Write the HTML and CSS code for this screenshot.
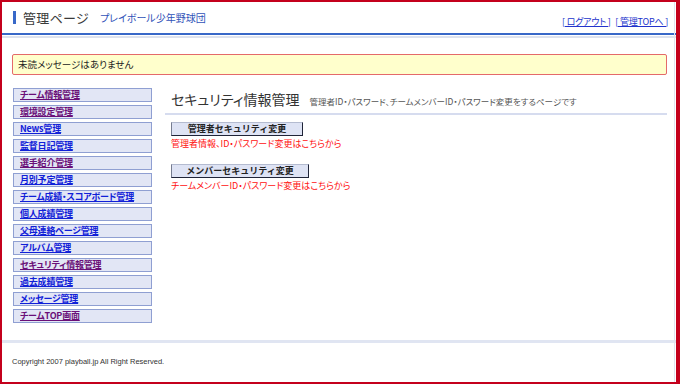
FILE: index.html
```html
<!DOCTYPE html>
<html lang="ja">
<head>
    <meta charset="UTF-8">
    <meta name="viewport" content="width=device-width, initial-scale=1.0">
    <title>管理ページ</title>
    <link rel="stylesheet" href="styles.css">
</head>
<body>
    <div class="frame">
        <div class="header">
            <div class="site-title">
                <span class="title-bar"></span>
                <h1>管理ページ</h1>
                <span class="team-name">プレイボール少年野球団</span>
            </div>
            <div class="header-links">
                <a href="#">[ ログアウト ]</a>
                <a href="#">[ 管理TOPへ ]</a>
            </div>
        </div>
        <div class="header-rule"></div>

        <div class="notice">未読メッセージはありません</div>

        <div class="layout">
            <ul class="side-menu">
                <li><a href="#" class="visited">チーム情報管理</a></li>
                <li><a href="#" class="visited">環境設定管理</a></li>
                <li><a href="#">News管理</a></li>
                <li><a href="#">監督日記管理</a></li>
                <li><a href="#" class="visited">選手紹介管理</a></li>
                <li><a href="#">月別予定管理</a></li>
                <li><a href="#">チーム成績・スコアボード管理</a></li>
                <li><a href="#">個人成績管理</a></li>
                <li><a href="#">父母連絡ページ管理</a></li>
                <li><a href="#">アルバム管理</a></li>
                <li><a href="#" class="visited">セキュリティ情報管理</a></li>
                <li><a href="#">過去成績管理</a></li>
                <li><a href="#">メッセージ管理</a></li>
                <li><a href="#" class="visited">チームTOP画面</a></li>
            </ul>

            <div class="main">
                <div class="page-head">
                    <h2>セキュリティ情報管理</h2>
                    <span class="page-desc">管理者ID・パスワード、チームメンバーID・パスワード変更をするページです</span>
                </div>

                <div class="action">
                    <button class="action-btn btn-admin">管理者セキュリティ変更</button>
                    <p class="action-note">管理者情報、ID・パスワード変更はこちらから</p>
                </div>

                <div class="action">
                    <button class="action-btn btn-member">メンバーセキュリティ変更</button>
                    <p class="action-note">チームメンバーID・パスワード変更はこちらから</p>
                </div>
            </div>
        </div>

        <div class="footer">
            Copyright 2007 playball.jp All Right Reserved.
        </div>
    </div>
</body>
</html>
```

FILE: styles.css
```css
body {
    margin: 0;
    font-family: "Noto Sans CJK JP", "Liberation Sans", sans-serif;
    font-feature-settings: "palt";
    color: #333;
    background: white;
}
.frame {
    box-sizing: border-box;
    width: 680px;
    height: 384px;
    border-style: solid;
    border-color: #c4001c;
    border-width: 2px 4px 2px 2px;
    position: relative;
    display: flex;
    flex-direction: column;
}
.frame::after {
    content: "";
    position: absolute;
    top: 0;
    bottom: 0;
    right: 1px;
    width: 1px;
    background: #dfe3ee;
}
.header {
    height: 31px;
    display: flex;
    align-items: center;
    justify-content: space-between;
    padding: 0 8px 0 11px;
    border-bottom: 2px solid #3868c8;
}
.site-title {
    display: flex;
    align-items: center;
}
.title-bar {
    width: 3px;
    height: 13px;
    background: #3868c8;
    margin-right: 7px;
}
.site-title h1 {
    margin: 0 11px 0 0;
    font-size: 13px;
    font-weight: normal;
    color: #3a3a3a;
    line-height: 1;
    letter-spacing: 0.3px;
}
.team-name {
    font-size: 10px;
    color: #2f52b8;
}
.header-links a {
    font-size: 9px;
    color: #2233cc;
    margin-left: 1px;
    letter-spacing: -0.2px;
}
.header-rule {
    height: 2px;
    margin-top: 1px;
    background: #dde2ee;
}
.notice {
    margin: 16px 9px 0 10px;
    height: 19px;
    line-height: 19px;
    padding-left: 5px;
    background: #ffffcc;
    border: 1px solid #e46a6a;
    border-radius: 2px;
    font-size: 9.5px;
    color: #222;
}
.layout {
    display: flex;
    margin-top: 13px;
    flex: 1;
}
.side-menu {
    list-style: none;
    margin: 0 0 0 11px;
    padding: 0;
    width: 139px;
}
.side-menu li {
    box-sizing: border-box;
    height: 14px;
    margin-bottom: 3px;
    background: #e2e6f5;
    border: 1px solid #8f9fd2;
    padding-left: 6px;
    font-size: 9px;
    line-height: 12px;
}
.side-menu a {
    display: block;
    font-size: 9px;
    line-height: 12px;
    font-weight: bold;
    color: #1020d8;
    letter-spacing: -0.2px;
}
.side-menu a.visited {
    color: #6a0f78;
}
.main {
    flex: 1;
    margin: 0 9px 0 13px;
}
.page-head {
    display: flex;
    align-items: baseline;
    padding: 3px 0 6px 6px;
    border-bottom: 2px solid #d6dcef;
}
.page-head h2 {
    margin: 0 10px 0 0;
    font-size: 14px;
    font-weight: normal;
    color: #333;
    line-height: 16px;
}
.page-desc {
    font-size: 8.5px;
    color: #555;
}
.action {
    margin: 7px 0 0 6px;
}
.action + .action {
    margin-top: 15px;
}
.action-btn {
    display: block;
    height: 14px;
    padding: 0;
    font-family: inherit;
    font-size: 9px;
    font-weight: bold;
    color: #222;
    line-height: 12px;
    background: #dee3f4;
    border: 1px solid;
    border-color: #b4bbd0 #1f2438 #1f2438 #767c90;
}
.btn-admin {
    width: 132px;
}
.btn-member {
    width: 138px;
}
.action-note {
    margin: 3px 0 0 0;
    font-size: 9px;
    color: #ff1010;
    line-height: 10px;
}
.footer {
    border-top: 3px solid #e0e5f2;
    height: 39px;
    padding: 0 0 0 10px;
    font-family: "Liberation Sans", sans-serif;
    font-size: 7.5px;
    color: #333;
    line-height: 38px;
}
```
